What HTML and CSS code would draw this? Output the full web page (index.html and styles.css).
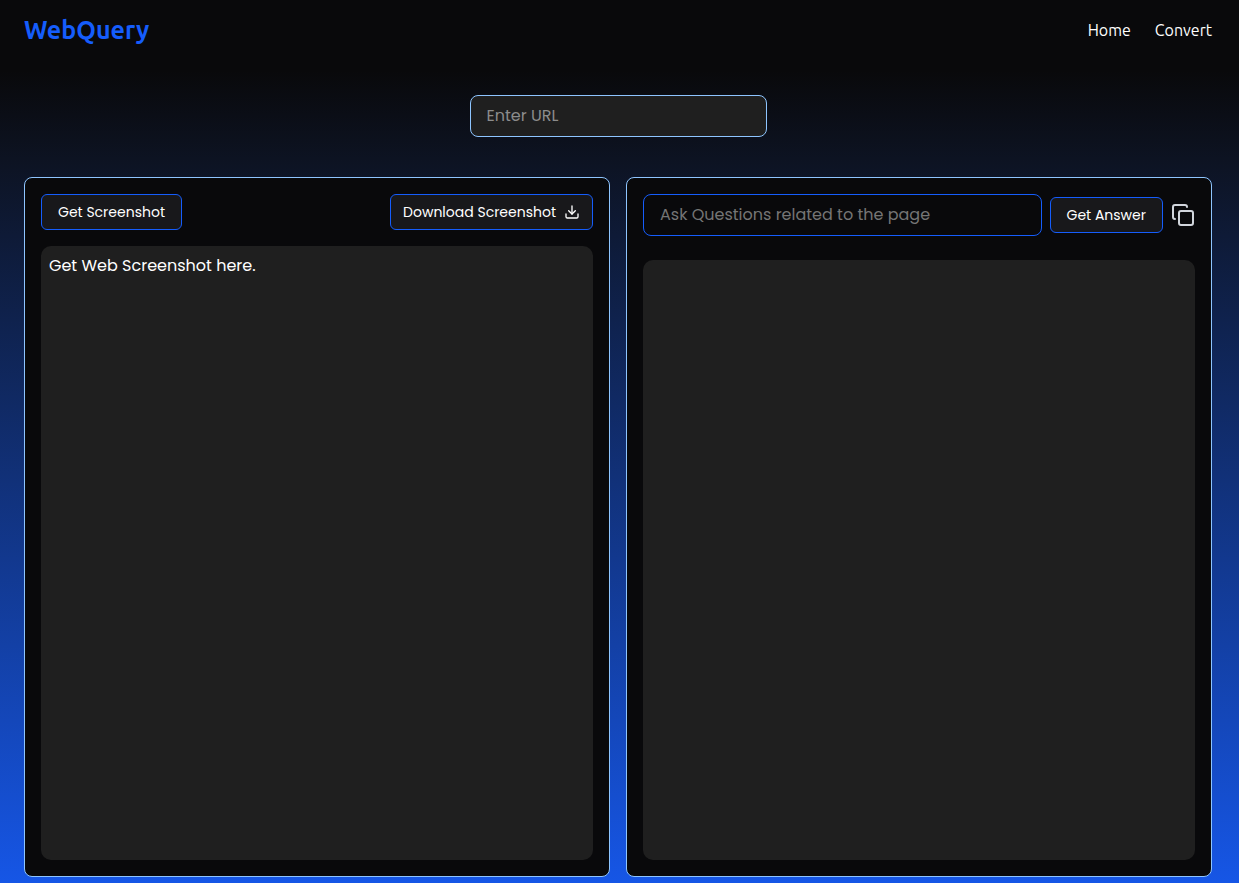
FILE: index.html
```html
<!DOCTYPE html>
<html lang="en">
<head>
  <meta charset="utf-8">
  <meta name="viewport" content="width=device-width, initial-scale=1">
  <title>WebQuery</title>
  <link rel="stylesheet" href="styles.css">
</head>
<body>
  <header class="navbar">
    <a class="logo" href="#">WebQuery</a>
    <nav class="nav-links">
      <a href="#">Home</a>
      <a href="#">Convert</a>
    </nav>
  </header>
  <main class="content">
    <input class="field url-field" type="url" placeholder="Enter URL" aria-label="Enter URL">
    <div class="panels">
      <section class="panel">
        <div class="toolbar toolbar-split">
          <button class="button" type="button">Get Screenshot</button>
          <button class="button button-download" type="button">Download Screenshot
            <svg class="download-icon" viewBox="0 0 24 24" fill="none" stroke="currentColor" stroke-width="2" stroke-linecap="round" stroke-linejoin="round" aria-hidden="true"><path d="M21 15v4a2 2 0 0 1-2 2H5a2 2 0 0 1-2-2v-4"/><path d="m7 10 5 5 5-5"/><path d="M12 15V3"/></svg>
          </button>
        </div>
        <div class="output">Get Web Screenshot here.</div>
      </section>
      <section class="panel panel-answer">
        <div class="toolbar">
          <input class="field question-field" type="text" placeholder="Ask Questions related to the page" aria-label="Ask Questions related to the page">
          <button class="button" type="button">Get Answer</button>
          <button class="copy-button" type="button" aria-label="Copy answer">
            <svg class="copy-icon" viewBox="0 0 24 24" fill="none" stroke="currentColor" stroke-width="2" stroke-linecap="round" stroke-linejoin="round" aria-hidden="true"><rect x="8" y="8" width="14" height="14" rx="2"/><path d="M4 16c-1.100 0-2-.9-2-2V4c0-1.100.9-2 2-2h10c1.100 0 2 .9 2 2"/></svg>
          </button>
        </div>
        <div class="output"></div>
      </section>
    </div>
  </main>
</body>
</html>
```
FILE: styles.css
```css
* { box-sizing: border-box; }

body {
  margin: 0;
  min-height: 100vh;
  display: flex;
  flex-direction: column;
  background: linear-gradient(to bottom, #09090b 0%, #09090b 8%, #0d1322 18%, #1656e6 100%) fixed;
  color: #fff;
  font-family: Poppins, Inter, sans-serif;
  font-size: 16px;
  line-height: 24px;
}

.navbar {
  display: flex;
  align-items: center;
  justify-content: space-between;
  height: 60px;
  padding: 0 27px 0 24px;
  font-family: Ubuntu, "Noto Sans", sans-serif;
}

.logo {
  color: #155dfc;
  font-size: 25px;
  font-weight: 600;
  line-height: 32px;
  text-decoration: none;
}

.nav-links { display: flex; gap: 24px; }

.nav-links a { color: #fff; font-weight: 400; text-decoration: none; }

.content {
  flex: 1;
  display: flex;
  flex-direction: column;
  align-items: center;
  padding: 35px 27px 6px 24px;
}

.field {
  height: 42px;
  padding: 0 16px 2px;
  border: 1px solid #155dfc;
  border-radius: 8px;
  background: transparent;
  color: #fff;
  font: inherit;
}

.field::placeholder { color: #757575; opacity: 1; }

.url-field {
  width: 297px;
  border-color: #8ec5ff;
  background: #1f1f1f;
}

.url-field::placeholder { color: #8c8c8c; }

.panels {
  flex: 1;
  align-self: stretch;
  display: grid;
  grid-template-columns: repeat(2, minmax(0, 1fr));
  gap: 16px;
  margin-top: 40px;
}

.panel {
  display: flex;
  flex-direction: column;
  gap: 16px;
  padding: 16px;
  border: 1px solid #8ec5ff;
  border-radius: 8px;
  background: #09090b;
}

.panel-answer { gap: 24px; }

.toolbar { display: flex; align-items: center; gap: 8px; }

.toolbar-split { justify-content: space-between; }

.button {
  display: flex;
  align-items: center;
  gap: 8px;
  height: 36px;
  padding: 0 16px;
  border: 1px solid #155dfc;
  border-radius: 6px;
  background: #18181b;
  color: #fff;
  font: inherit;
  font-size: 14px;
  white-space: nowrap;
}

.button-download { padding: 0 12px; }

.download-icon { width: 16px; height: 16px; }

.question-field { flex: 1; min-width: 0; }

.copy-button {
  display: flex;
  padding: 0;
  border: 0;
  background: none;
  color: #d1d5dc;
}

.copy-icon { width: 24px; height: 24px; }

.output {
  flex: 1;
  padding: 8px;
  border-radius: 10px;
  background: #1f1f1f;
}
```
